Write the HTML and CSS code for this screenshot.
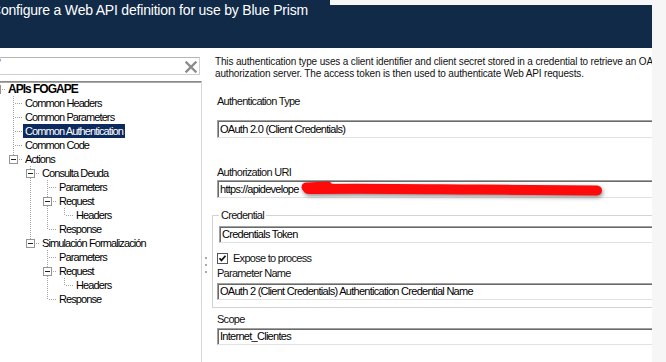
FILE: index.html
```html
<!DOCTYPE html>
<html lang="en">
<head>
<meta charset="utf-8">
<title>Configure a Web API definition</title>
<link rel="stylesheet" href="styles.css">
</head>
<body>
<div class="app">
  <header class="titlebar">
    <h1 class="title">Configure a Web API definition for use by Blue Prism</h1>
  </header>
  <div class="main">
    <aside class="left">
      <div class="search">
        <span class="search-mark">'</span>
        <svg class="clear" width="12" height="12" viewBox="0 0 12 12"><path d="M1.5 1.5 L10.5 10.5 M10.5 1.5 L1.5 10.5" stroke="#8c8c8c" stroke-width="2.4" stroke-linecap="square"/></svg>
      </div>
      <div class="tree">
        <div class="tree-inner">
          <div class="row"><span class="c h"><i class="exp"></i></span><span class="lbl root">APIs FOGAPE</span></div>
          <div class="row"><span class="c"></span><span class="c t"></span><span class="lbl">Common Headers</span></div>
          <div class="row"><span class="c"></span><span class="c t"></span><span class="lbl">Common Parameters</span></div>
          <div class="row"><span class="c"></span><span class="c t"></span><span class="lbl sel">Common Authentication</span></div>
          <div class="row"><span class="c"></span><span class="c t"></span><span class="lbl">Common Code</span></div>
          <div class="row"><span class="c"></span><span class="c l"><i class="exp"></i></span><span class="lbl">Actions</span></div>
          <div class="row"><span class="c"></span><span class="c"></span><span class="c t"><i class="exp"></i></span><span class="lbl">Consulta Deuda</span></div>
          <div class="row"><span class="c"></span><span class="c"></span><span class="c v"></span><span class="c t"></span><span class="lbl">Parameters</span></div>
          <div class="row"><span class="c"></span><span class="c"></span><span class="c v"></span><span class="c t"><i class="exp"></i></span><span class="lbl">Request</span></div>
          <div class="row"><span class="c"></span><span class="c"></span><span class="c v"></span><span class="c v"></span><span class="c l"></span><span class="lbl">Headers</span></div>
          <div class="row"><span class="c"></span><span class="c"></span><span class="c v"></span><span class="c l"></span><span class="lbl">Response</span></div>
          <div class="row"><span class="c"></span><span class="c"></span><span class="c l"><i class="exp"></i></span><span class="lbl">Simulación Formalización</span></div>
          <div class="row"><span class="c"></span><span class="c"></span><span class="c"></span><span class="c t"></span><span class="lbl">Parameters</span></div>
          <div class="row"><span class="c"></span><span class="c"></span><span class="c"></span><span class="c t"><i class="exp"></i></span><span class="lbl">Request</span></div>
          <div class="row"><span class="c"></span><span class="c"></span><span class="c"></span><span class="c v"></span><span class="c l"></span><span class="lbl">Headers</span></div>
          <div class="row"><span class="c"></span><span class="c"></span><span class="c"></span><span class="c l"></span><span class="lbl">Response</span></div>
        </div>
      </div>
    </aside>
    <div class="splitter"><span class="dot"></span><span class="dot"></span><span class="dot"></span></div>
    <section class="right">
      <p class="desc">This authentication type uses a client identifier and client secret stored in a credential to retrieve an OAuth 2.0 access token from the<br>authorization server. The access token is then used to authenticate Web API requests.</p>
      <div class="label label-type">Authentication Type</div>
      <div class="box box-type">OAuth 2.0 (Client Credentials)</div>
      <div class="label label-uri">Authorization URI</div>
      <div class="box box-uri">https://apidevelope
        <svg class="scribble" width="310" height="22" viewBox="0 0 310 22"><path d="M10 9 C 60 8, 120 9, 180 9.5 S 270 10.5, 299 10.5" stroke="#ff0a0a" stroke-width="10" stroke-linecap="round" fill="none"/><path d="M8 7 L 30 6" stroke="#ff0a0a" stroke-width="9" stroke-linecap="round"/></svg>
      </div>
      <fieldset class="group">
        <legend class="legend">Credential</legend>
        <div class="box box-cred">Credentials Token</div>
        <label class="check">
          <svg class="checkbox" width="11" height="11" viewBox="0 0 11 11"><rect x="0.5" y="0.5" width="10" height="10" fill="#fff" stroke="#555"/><path d="M2.5 5.2 L4.5 7.4 L8.5 2.8" stroke="#111" stroke-width="1.7" fill="none"/></svg>
          <span>Expose to process</span>
        </label>
        <div class="label label-param">Parameter Name</div>
        <div class="box box-param">OAuth 2 (Client Credentials) Authentication Credential Name</div>
      </fieldset>
      <div class="label label-scope">Scope</div>
      <div class="box box-scope">Internet_Clientes</div>
    </section>
  </div>
</div>
</body>
</html>
```
FILE: styles.css
```css
* { box-sizing: border-box; }
html, body { margin: 0; padding: 0; }
body {
  width: 666px;
  height: 362px;
  overflow: hidden;
  background: #f6f6f6;
  font-family: "Liberation Sans", Arial, sans-serif;
  color: #000;
}
.app {
  width: 652px;
  height: 362px;
  background: #fff;
  display: flex;
  flex-direction: column;
  overflow: hidden;
}
.titlebar {
  position: relative;
  height: 48px;
  flex: none;
  background: #102a48;
  overflow: hidden;
}
.titlebar::before {
  content: "";
  position: absolute;
  left: 330px;
  right: 0;
  top: 0;
  height: 5px;
  background: #f6f6f6;
}
.title {
  margin: 0 0 0 -9px;
  padding-top: 2px;
  font-weight: normal;
  font-size: 14px;
  letter-spacing: -0.2px;
  line-height: 16px;
  color: #fff;
  white-space: nowrap;
}
.main {
  flex: 1;
  display: flex;
  min-height: 0;
}
.left {
  width: 202px;
  flex: none;
  display: flex;
  flex-direction: column;
  padding-top: 9px;
}
.search {
  height: 18px;
  margin-right: 2px;
  border: 1px solid #cfcfcf;
  border-top-color: #b5b5b5;
  border-left: none;
  background: #fff;
  display: flex;
  align-items: center;
  justify-content: space-between;
  padding-right: 2px;
}
.search-mark {
  font-size: 11px;
  line-height: 10px;
  color: #666;
  align-self: flex-start;
  margin-left: -1px;
}
.clear { display: block; margin-top: 2px; }
.tree {
  margin-top: 6px;
  flex: 1;
  background: #fff;
  border-top: 1px solid #8a8a8a;
  box-shadow: inset 0 1px #a9a9a9;
  border-right: 1px solid #d6d6d6;
  overflow: hidden;
}
.tree-inner {
  margin-left: -12px;
}
.row {
  display: flex;
  height: 14px;
  align-items: center;
}
.c {
  width: 17px;
  height: 14px;
  flex: none;
  position: relative;
}
.c.v::before, .c.t::before, .c.l::before {
  content: "";
  position: absolute;
  left: 8px;
  top: 0;
  width: 1px;
  height: 14px;
  background: repeating-linear-gradient(to bottom, #a3a3a3 0 1px, transparent 1px 2px);
}
.c.l::before { height: 7px; }
.c.t::after, .c.l::after, .c.h::after {
  content: "";
  position: absolute;
  left: 9px;
  top: 7px;
  width: 8px;
  height: 1px;
  background: repeating-linear-gradient(to right, transparent 0 1px, #a3a3a3 1px 2px);
}
.exp {
  position: absolute;
  left: 4px;
  top: 3px;
  width: 9px;
  height: 9px;
  border: 1px solid #949494;
  background: #fff;
  z-index: 1;
}
.exp::after {
  content: "";
  position: absolute;
  left: 1px;
  top: 3px;
  width: 5px;
  height: 1px;
  background: #222;
}
.lbl {
  margin-left: 1px;
  padding: 0 2px;
  font-size: 11px;
  letter-spacing: -0.9px;
  line-height: 14px;
  height: 14px;
  white-space: nowrap;
}
.lbl.root {
  font-weight: bold;
  font-size: 12px;
  letter-spacing: -1px;
}
.lbl.sel {
  background: #0d2a5e;
  color: #fff;
}
.splitter {
  width: 8px;
  flex: none;
  display: flex;
  flex-direction: column;
  gap: 5px;
  padding: 209px 0 0 3px;
}
.dot {
  width: 2px;
  height: 2px;
  background: #a8a8a8;
}
.right {
  flex: 1;
  min-width: 0;
  overflow: hidden;
  padding: 8px 0 0 7px;
  font-size: 11px;
  letter-spacing: -0.72px;
}
.desc {
  margin: 0 0 0 -2px;
  font-size: 10px;
  letter-spacing: -0.15px;
  line-height: 12px;
  height: 24px;
  white-space: nowrap;
  color: #111;
}
.label {
  line-height: 14px;
  height: 14px;
  white-space: nowrap;
  color: #111;
}
.label-type { margin-top: 14px; }
.label-uri { margin-top: 27px; }
.box {
  position: relative;
  margin-right: -20px;
  height: 18px;
  border-top: 1px solid #a0a0a0;
  border-left: 1px solid #a0a0a0;
  border-bottom: 1px solid #e2e2e2;
  box-shadow: inset 1px 1px #6a6a6a;
  background: #fff;
  padding-left: 2px;
  line-height: 16px;
  white-space: nowrap;
}
.box-type { margin-top: 12px; }
.box-uri { margin-top: 1px; }
.scribble {
  position: absolute;
  left: 80px;
  top: -1px;
  filter: drop-shadow(1px 2px 2px rgba(0,0,0,0.45));
}
.group {
  margin: 10px -20px 0 -5px;
  padding: 0 0 7px 4px;
  border: 1px solid #d3d3d3;
  min-width: 0;
}
.legend {
  margin-left: 2px;
  padding: 0 2px;
  line-height: 14px;
  color: #111;
}
.box-cred { margin: 4px 0 0 2px; height: 17px; line-height: 15px; }
.check {
  display: flex;
  align-items: center;
  gap: 5px;
  height: 14px;
  margin-top: 8px;
  color: #111;
}
.checkbox { display: block; flex: none; }
.label-param { margin-top: 1px; }
.box-param { margin-top: 3px; height: 17px; line-height: 15px; }
.label-scope { margin-top: 4px; }
.box-scope { margin-top: 2px; height: 17px; line-height: 15px; }
```
